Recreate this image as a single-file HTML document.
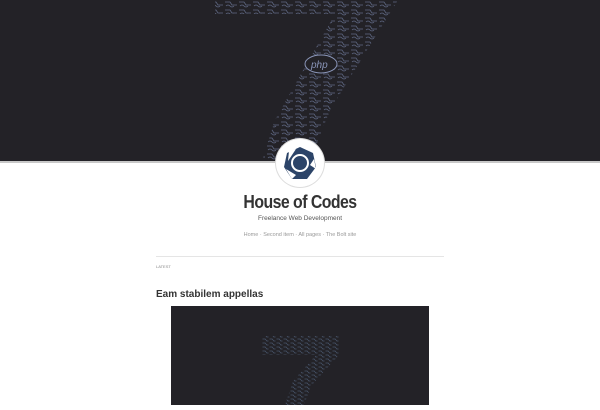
<!DOCTYPE html>
<html><head><style>
*{margin:0;padding:0;box-sizing:border-box}
body{width:600px;height:405px;overflow:hidden;background:#fff;font-family:"Liberation Sans",sans-serif;position:relative}
.hero{position:absolute;left:0;top:0;width:600px;height:161px;background:#232227}
.line{position:absolute;left:0;top:161px;width:600px;height:2px;background:#c8c8c8}
.logo{position:absolute;left:276px;top:139px;width:48px;height:48px;border-radius:50%;background:#fff;box-shadow:0 0 0 1px #ddd}
h1{position:absolute;top:192px;width:600px;text-align:center;font-size:18px;font-weight:bold;color:#333;letter-spacing:-0.6px;transform:scaleX(0.88)}
.sub{position:absolute;top:215px;width:600px;text-align:center;font-size:6.5px;color:#555}
.nav{position:absolute;top:232px;width:600px;text-align:center;font-size:5.5px;color:#999}
.hr{position:absolute;left:156px;top:256px;width:288px;height:1px;background:#e5e5e5}
.latest{position:absolute;left:156px;top:264px;font-size:4px;color:#888}
h2{position:absolute;left:156px;top:289px;font-size:10px;font-weight:bold;color:#333}
.img{position:absolute;left:171px;top:306px;width:258px;height:99px;background:#232227}
</style></head><body>
<div class="hero">
<svg width="600" height="161">
<defs>
<pattern id="p" width="14" height="8" patternUnits="userSpaceOnUse">
<path d="M1 2h5l2 3h5M2 6q2-2 4 0t4 0" stroke="#6d7898" stroke-width="0.8" fill="none" opacity="0.8"/>
</pattern>
<pattern id="p2" width="7" height="4" patternUnits="userSpaceOnUse">
<path d="M0.5 1h3l1 2h2" stroke="#5a6d8c" stroke-width="0.5" fill="none"/>
</pattern>
</defs>
<polygon points="215,0 398,0 330,110 310,161 262,161 275,120 335,14 215,14" fill="url(#p)"/>
<ellipse cx="321" cy="64" rx="16" ry="9" fill="#232227" stroke="#8a95b8" stroke-width="1"/>
<text x="311" y="68" font-size="10" font-style="italic" fill="#8a95b8" font-family="Liberation Sans">php</text>
</svg>
</div>
<div class="line"></div>
<div class="logo"><svg width="48" height="48"><polygon points="24,8 37,14 40,28 31,40 16,40 8,28 11,14" fill="#2c4468"/><polygon points="13,12 20,10 12,22" fill="#fff"/><polygon points="38,20 40,30 34,26" fill="#fff"/><polygon points="16,40 10,30 20,36" fill="#fff"/><circle cx="24" cy="24" r="8" fill="#2c4468" stroke="#fff" stroke-width="2"/></svg></div>
<h1>House of Codes</h1>
<div class="sub">Freelance Web Development</div>
<div class="nav">Home · Second item · All pages · The Bolt site</div>
<div class="hr"></div>
<div class="latest">LATEST</div>
<h2>Eam stabilem appellas</h2>
<div class="img"><svg width="258" height="99"><polygon points="91,30 168,30 168,49 140,80 133,99 114,99 122,75 145,49 91,49" fill="url(#p2)"/></svg></div>
</body></html>
